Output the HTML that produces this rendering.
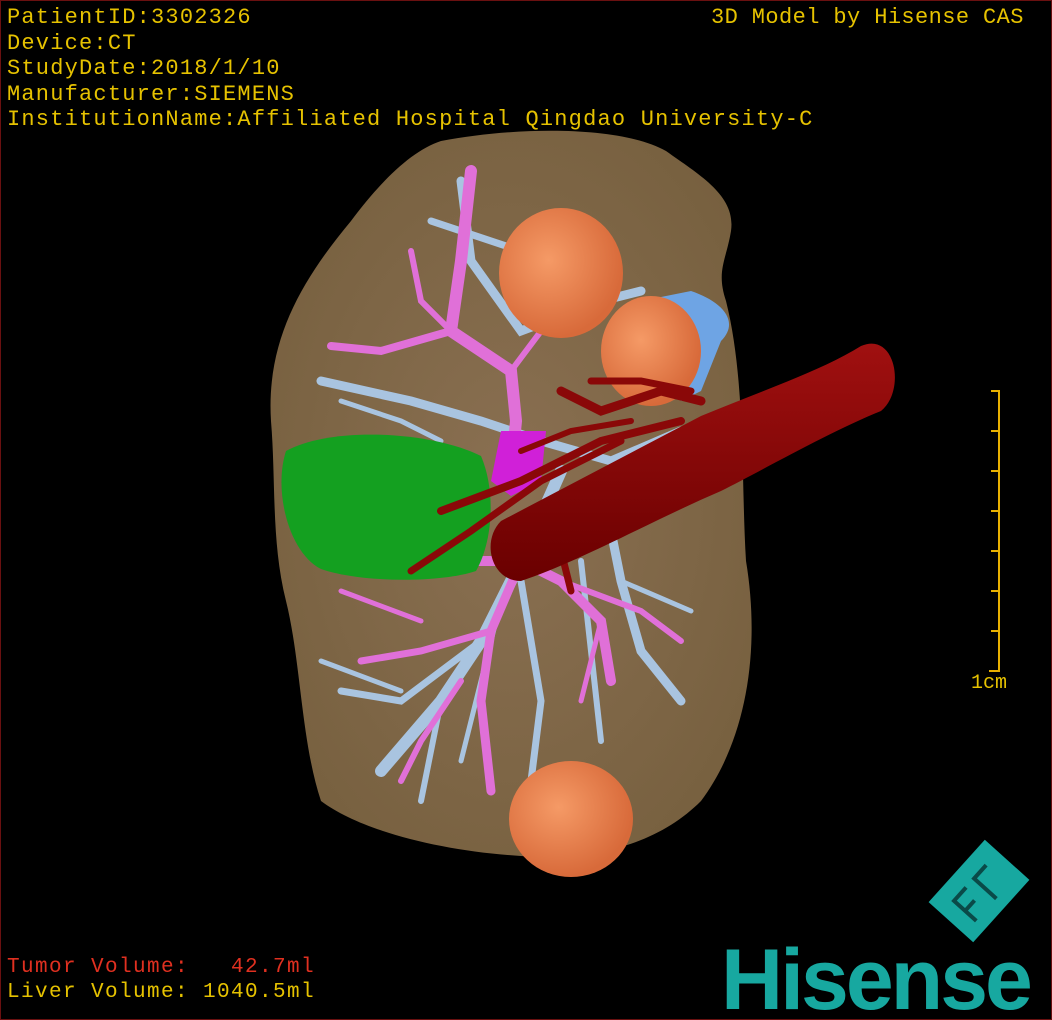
<!DOCTYPE html>
<html><head><style>
html,body{margin:0;padding:0;background:#000;}
#f{position:relative;width:1050px;height:1018px;border:1px solid #6a1010;overflow:hidden;background:#000;}
.t{position:absolute;font-family:"Liberation Mono",monospace;font-size:22px;color:#e6c200;line-height:25.5px;white-space:pre;letter-spacing:1.2px}
</style></head><body><div id="f">
<svg width="1050" height="1018" style="position:absolute;left:0;top:0">
<defs>
<radialGradient id="lv" cx="0.5" cy="0.5" r="0.6"><stop offset="0" stop-color="#8a7052"/><stop offset="1" stop-color="#77603f"/></radialGradient>
<radialGradient id="tm" cx="0.4" cy="0.4" r="0.6"><stop offset="0" stop-color="#f59a66"/><stop offset="1" stop-color="#d86a3a"/></radialGradient>
<linearGradient id="ar" x1="0" y1="0" x2="0" y2="1"><stop offset="0" stop-color="#a01010"/><stop offset="1" stop-color="#6a0000"/></linearGradient>
</defs>
<path d="M440,140 C520,125 620,125 665,150 C700,175 735,195 730,230 C725,260 715,270 725,300 C745,380 740,480 745,560 C760,650 745,740 700,800 C660,840 600,860 520,855 C440,850 360,830 320,800 C300,740 300,660 285,600 C270,540 275,480 270,420 C265,340 300,280 350,220 C380,180 410,150 440,140 Z" fill="url(#lv)"/>
<g fill="none" stroke="#a9c4e0" stroke-linecap="round">
<path d="M460,180 L470,260 L520,330 L600,300 L640,290" stroke-width="9"/>
<path d="M430,220 L520,250 L590,290" stroke-width="7"/>
<path d="M320,380 L410,400 L480,420 L540,440 L610,460 L680,430" stroke-width="9"/>
<path d="M340,400 L400,420 L440,440" stroke-width="5"/>
<path d="M560,470 L520,560 L480,640 L440,700 L380,770" stroke-width="12"/>
<path d="M480,640 L400,700 L340,690" stroke-width="7"/>
<path d="M440,700 L420,800" stroke-width="6"/>
<path d="M520,580 L540,700 L530,780" stroke-width="7"/>
<path d="M600,480 L620,580 L640,650 L680,700" stroke-width="9"/>
<path d="M620,580 L690,610" stroke-width="5"/>
<path d="M580,560 L590,650 L600,740" stroke-width="6"/>
<path d="M320,660 L400,690" stroke-width="5"/>
<path d="M500,600 L460,760" stroke-width="5"/>
</g>
<path d="M640,300 L690,290 C720,300 740,320 720,340 L700,390 L680,400 Z" fill="#6ea4e4"/>
<g fill="none" stroke="#e070d8" stroke-linecap="round">
<path d="M470,170 L460,260 L450,330 L510,370 L515,420 L510,470" stroke-width="12"/>
<path d="M450,330 L380,350 L330,345" stroke-width="8"/>
<path d="M450,330 L420,300 L410,250" stroke-width="6"/>
<path d="M510,370 L540,330 L560,290 L590,250" stroke-width="6"/>
<path d="M460,560 L520,560 L560,580 L600,620 L610,680" stroke-width="10"/>
<path d="M520,560 L490,630 L480,700 L490,790" stroke-width="9"/>
<path d="M490,630 L420,650 L360,660" stroke-width="7"/>
<path d="M460,680 L420,740 L400,780" stroke-width="6"/>
<path d="M560,580 L640,610 L680,640" stroke-width="6"/>
<path d="M600,620 L580,700" stroke-width="5"/>
<path d="M420,620 L340,590" stroke-width="5"/>
</g>
<ellipse cx="560" cy="272" rx="62" ry="65" fill="url(#tm)"/>
<ellipse cx="650" cy="350" rx="50" ry="55" fill="url(#tm)"/>
<ellipse cx="570" cy="818" rx="62" ry="58" fill="url(#tm)"/>
<path d="M285,450 C330,425 430,430 480,455 C495,490 492,540 475,570 C440,582 360,582 320,568 C288,552 272,490 285,450 Z" fill="#14a020"/>
<path d="M500,430 L545,430 L540,480 L510,495 L490,480 Z" fill="#d020d8"/>
<g fill="none" stroke="#8a0808" stroke-linecap="round">
<path d="M440,510 L520,480 L600,440 L680,420" stroke-width="8"/>
<path d="M410,570 L470,530 L540,480 L620,440" stroke-width="7"/>
<path d="M560,390 L600,410 L660,390 L700,400" stroke-width="9"/>
<path d="M590,380 L640,380 L690,390" stroke-width="7"/>
<path d="M520,450 L570,430 L630,420" stroke-width="6"/>
<path d="M560,550 L570,590" stroke-width="7"/>
</g>
<path d="M500,520 L700,415 C760,390 820,370 860,345 C895,330 905,390 880,410 C830,430 760,470 720,490 C650,520 580,560 520,580 C490,580 480,540 500,520 Z" fill="url(#ar)"/>
<g stroke="#e8b000" stroke-width="2" fill="none">
<path d="M990,390 L998,390 L998,670 L988,670"/>
<path d="M990,430 L998,430 M990,470 L998,470 M990,510 L998,510 M990,550 L998,550 M990,590 L998,590 M990,630 L998,630"/>
</g>
<g transform="translate(978,890) rotate(-48)">
<rect x="-42" y="-30" width="84" height="60" fill="#17a8a0"/>
<path d="M-24,18 L-24,-12 L-6,-12 M-24,3 L-10,3 M6,18 L6,-12 L24,-12" stroke="#0a4a48" stroke-width="4" fill="none"/>
</g>
</svg>
<div class="t" style="left:6px;top:4px">PatientID:3302326
Device:CT
StudyDate:2018/1/10
Manufacturer:SIEMENS
InstitutionName:Affiliated Hospital Qingdao University-C</div>
<div class="t" style="left:710px;top:4px;letter-spacing:0.4px">3D Model by Hisense CAS</div>
<div class="t" style="left:970px;top:670px;font-size:20px;letter-spacing:0">1cm</div>
<div class="t" style="left:6px;top:954px;color:#e03020;font-size:21px;letter-spacing:1.4px">Tumor Volume:   42.7ml</div>
<div class="t" style="left:6px;top:979px;font-size:21px;letter-spacing:1.4px">Liver Volume: 1040.5ml</div>
<div style="position:absolute;left:720px;top:936px;font-family:'Liberation Sans',sans-serif;font-weight:bold;font-size:86px;color:#17a8a0;letter-spacing:-3px;line-height:86px;transform:scaleX(1.0);transform-origin:left top">Hisense</div>
</div></body></html>
